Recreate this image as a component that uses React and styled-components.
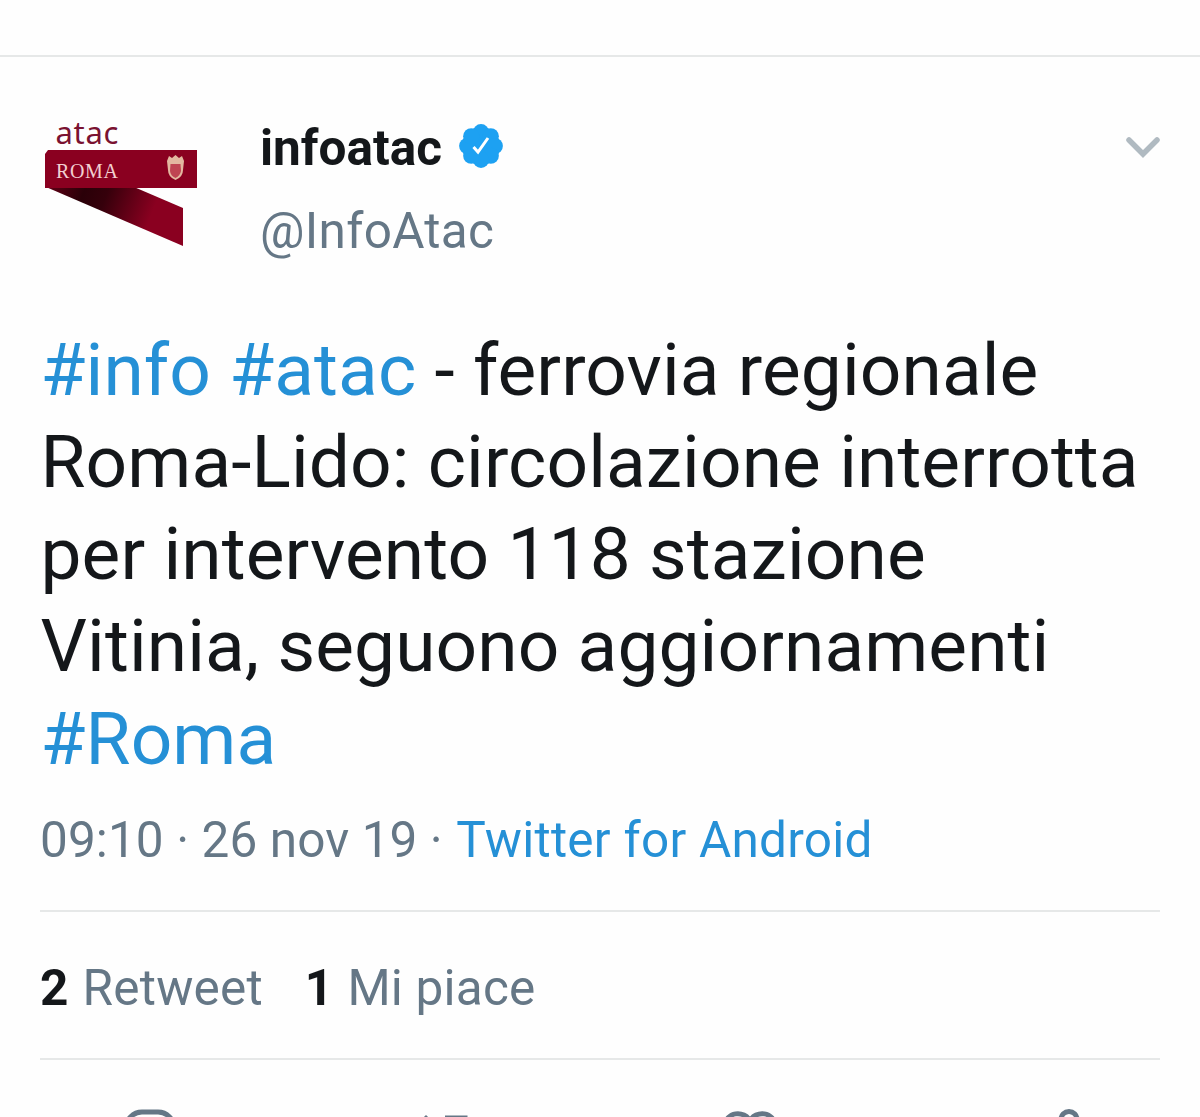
import React from "react"
import styled, { createGlobalStyle } from "styled-components"

const colors = {
  ink: "#14171a",
  grey: "#657786",
  link: "#2590d6",
  badge: "#1da1f2",
  rule: "#e6e8e8",
  chevron: "#b0bac1",
  wine: "#8a0020",
}

const spokes = [0, 45, 90, 135, 180, 225, 270, 315]

const Verified = () => (
  <svg width="44" height="46" viewBox="-22 -23 44 46">
    <g fill={colors.badge}>
      <circle r="19" />
      {spokes.map(angle => (
        <circle key={angle} cy="-13.8" r="8.1" transform={`rotate(${angle})`} />
      ))}
    </g>
    <path d="M-7.5 1 L-3 6 L7 -8" fill="none" stroke="#fff" strokeWidth="3" />
  </svg>
)

const Logo = () => (
  <LogoArt width="170" height="150" viewBox="0 -10 170 150">
    <defs>
      <linearGradient id="fold" gradientUnits="userSpaceOnUse" x1="10" y1="76" x2="112" y2="116">
        <stop offset="0" stopColor="#5c0014" />
        <stop offset="0.3" stopColor="#2a0008" />
        <stop offset="0.5" stopColor="#35000b" />
        <stop offset="0.95" stopColor={colors.wine} />
      </linearGradient>
    </defs>
    <path d="M6 75 L94 75 L143 96 L143 134 Z" fill="url(#fold)" />
    <path d="M8 38 H157 V76 H5 V42 Z" fill={colors.wine} />
    <LogoText x="15.5" y="31.5" textLength="63" fill="#7a1231">atac</LogoText>
    <LogoText x="16" y="66" textLength="62" fill="#f3cfd0" $serif>ROMA</LogoText>
    <path d="M127 49 l2 -5 3 2 3.5 -3 3.5 3 3 -2 2 5 -1 9 q0 7 -7.5 10 q-7.5 -3 -7.5 -10 Z" fill="#e3b8a0" />
    <path d="M130.5 52 h10 l0.5 7 q-1 5 -5.5 7 q-5 -2 -5.5 -7 Z" fill="#bf4552" />
  </LogoArt>
)

const Reply = () => (
  <svg width="56" height="48" viewBox="0 0 56 48">
    <path d="M20 3 H36 A16 16 0 0 1 36 35 L26 45 V35 H20 A16 16 0 0 1 20 3 Z" />
  </svg>
)

const Retweet = () => (
  <svg width="72" height="48" viewBox="0 0 72 48">
    <path d="M6 20 L17 9.5 L28 20 M17 11 V40 H38 M36 9 H56 V40 M45 30 L56 41 L67 30" />
  </svg>
)

const Like = () => (
  <svg width="58" height="52" viewBox="0 0 58 52">
    <path d="M29 12 C24 1 4 2 4 18 C4 32 20 43 29 48 C38 43 54 32 54 18 C54 2 34 1 29 12 Z" />
  </svg>
)

const Share = () => (
  <svg width="60" height="52" viewBox="0 0 60 52">
    <circle cx="30" cy="10.5" r="8" />
    <circle cx="10" cy="40" r="8" />
    <circle cx="50" cy="40" r="8" />
    <path d="M26 18 L15 33 M34 18 L45 33" />
  </svg>
)

export default () => (
  <Page>
    <GlobalStyle />
    <TopBar />
    <Tweet>
      <Header>
        <Logo />
        <Names>
          <Name>
            infoatac
            <Verified />
          </Name>
          <Handle>@InfoAtac</Handle>
        </Names>
        <Chevron viewBox="0 0 36 24">
          <path d="M4 4 L18 18 L32 4" />
        </Chevron>
      </Header>
      <Body>
        <Line>
          <Hash>#info</Hash> <Hash>#atac</Hash> - ferrovia regionale
        </Line>
        <Line>Roma-Lido: circolazione interrotta</Line>
        <Line>per intervento 118 stazione</Line>
        <Line>Vitinia, seguono aggiornamenti</Line>
        <Line>
          <Hash>#Roma</Hash>
        </Line>
      </Body>
      <Meta>
        09:10 · 26 nov 19 · <Source>Twitter for Android</Source>
      </Meta>
      <Stats>
        <Stat>
          <b>2</b> Retweet
        </Stat>
        <Stat>
          <b>1</b> Mi piace
        </Stat>
      </Stats>
      <Actions>
        <Reply />
        <Retweet />
        <Like />
        <Share />
      </Actions>
    </Tweet>
  </Page>
)

const GlobalStyle = createGlobalStyle`
  * {
    box-sizing: border-box;
  }
  body {
    margin: 0;
    background: #fefefe;
  }
`

const Page = styled.div`
  width: 1200px;
  height: 1117px;
  overflow: hidden;
  display: flex;
  flex-direction: column;
  font-family: Roboto, "Liberation Sans", sans-serif;
  color: ${colors.ink};
`

const TopBar = styled.div`
  flex: none;
  height: 57px;
  border-bottom: 2px solid ${colors.rule};
`

const Tweet = styled.article`
  flex: none;
  padding: 55px 40px 0;
`

const Header = styled.header`
  display: flex;
  height: 211.6px;
`

const LogoArt = styled.svg`
  margin-top: -10px;
`

const Names = styled.div`
  flex: 1;
  padding-left: 50px;
`

const Name = styled.div`
  display: flex;
  align-items: center;
  gap: 17px;
  height: 71px;
  font-size: 49.5px;
  font-weight: 700;
  svg {
    margin-bottom: 4px;
  }
`

const Handle = styled.div`
  height: 96px;
  line-height: 96px;
  font-size: 49.5px;
  letter-spacing: 0.3px;
  color: ${colors.grey};
`

const Chevron = styled.svg`
  width: 36px;
  height: 24px;
  margin: 24px -1px 0 0;
  fill: none;
  stroke: ${colors.chevron};
  stroke-width: 5.5;
  stroke-linecap: round;
`

const LogoText = styled.text`
  font-family: ${props => (props.$serif ? '"Liberation Serif", serif' : '"Noto Sans", sans-serif')};
  font-size: ${props => (props.$serif ? 20 : 31)}px;
`

const Body = styled.div`
  padding-left: 0.5px;
  font-size: 73px;
  line-height: 92.3px;
  letter-spacing: 0.1px;
`

const Line = styled.div`
  white-space: nowrap;
`

const Hash = styled.span`
  color: ${colors.link};
`

const Meta = styled.div`
  height: 126.9px;
  padding-top: 23px;
  line-height: 64px;
  font-size: 49.5px;
  letter-spacing: 0.1px;
  color: ${colors.grey};
  border-bottom: 2px solid ${colors.rule};
`

const Source = styled(Hash)`
  margin-left: 1px;
  letter-spacing: 0.26px;
`

const Stats = styled.div`
  display: flex;
  gap: 42px;
  height: 148px;
  line-height: 152px;
  font-size: 49.5px;
  letter-spacing: 0.2px;
  color: ${colors.grey};
  border-bottom: 2px solid ${colors.rule};
`

const Stat = styled.div`
  white-space: nowrap;
  b {
    margin-right: 1.5px;
    color: ${colors.ink};
  }
`

const Actions = styled.div`
  display: grid;
  grid-template-columns: 287px 312px 318px 60px;
  padding: 49px 0 0 82px;
  svg {
    fill: none;
    stroke: ${colors.grey};
    stroke-width: 5;
  }
`
